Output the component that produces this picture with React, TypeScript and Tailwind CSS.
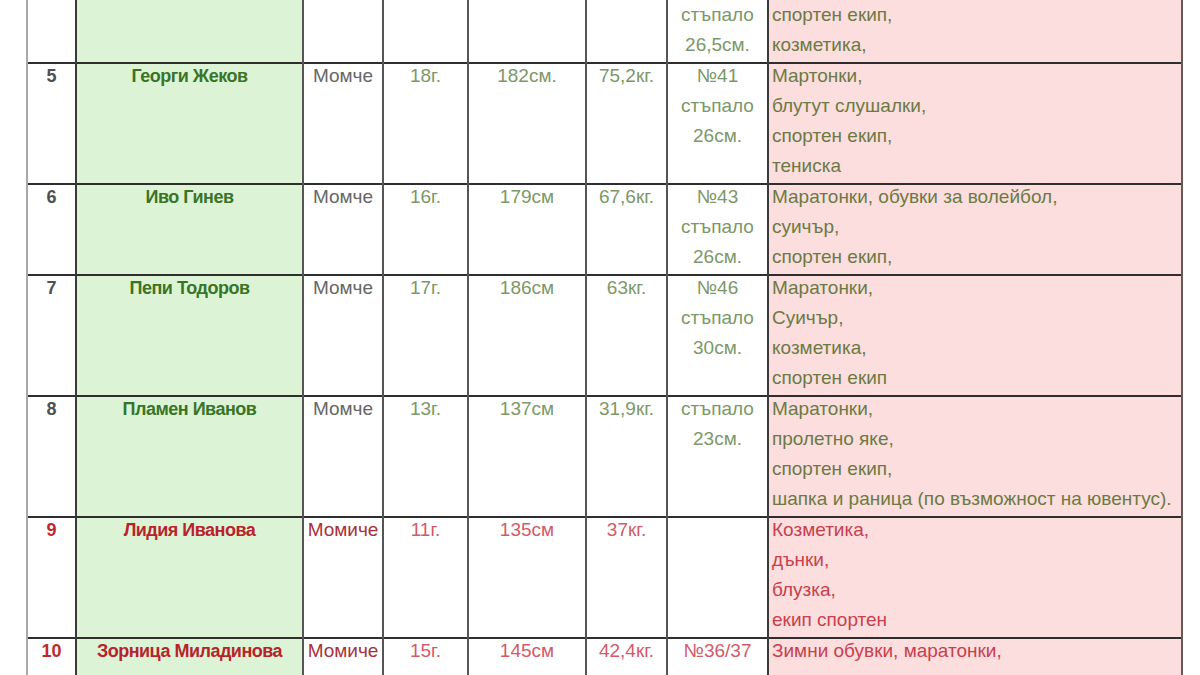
import React from "react";

type Row = {
  n: string;
  name: string;
  g: string;
  age: string;
  h: string;
  w: string;
  shoe: string[];
  items: string[];
  red?: boolean;
};

const rows: Row[] = [
  {
    n: "4",
    name: "Мартин Петров",
    g: "Момче",
    age: "14г.",
    h: "165см",
    w: "52кг.",
    shoe: ["№40/41", "\u00a0", "стъпало", "26,5см."],
    items: ["Маратонки,", "дънки,", "спортен екип,", "козметика,"],
  },
  {
    n: "5",
    name: "Георги Жеков",
    g: "Момче",
    age: "18г.",
    h: "182см.",
    w: "75,2кг.",
    shoe: ["№41", "стъпало", "26см."],
    items: ["Мартонки,", "блутут слушалки,", "спортен екип,", "тениска"],
  },
  {
    n: "6",
    name: "Иво Гинев",
    g: "Момче",
    age: "16г.",
    h: "179см",
    w: "67,6кг.",
    shoe: ["№43", "стъпало", "26см."],
    items: ["Маратонки, обувки за волейбол,", "суичър,", "спортен екип,"],
  },
  {
    n: "7",
    name: "Пепи Тодоров",
    g: "Момче",
    age: "17г.",
    h: "186см",
    w: "63кг.",
    shoe: ["№46", "стъпало", "30см."],
    items: ["Маратонки,", "Суичър,", "козметика,", "спортен екип"],
  },
  {
    n: "8",
    name: "Пламен Иванов",
    g: "Момче",
    age: "13г.",
    h: "137см",
    w: "31,9кг.",
    shoe: ["стъпало", "23см."],
    items: [
      "Маратонки,",
      "пролетно яке,",
      "спортен екип,",
      "шапка и раница (по възможност на ювентус).",
    ],
  },
  {
    n: "9",
    name: "Лидия Иванова",
    g: "Момиче",
    age: "11г.",
    h: "135см",
    w: "37кг.",
    shoe: [],
    items: ["Козметика,", "дънки,", "блузка,", "екип спортен"],
    red: true,
  },
  {
    n: "10",
    name: "Зорница Миладинова",
    g: "Момиче",
    age: "15г.",
    h: "145см",
    w: "42,4кг.",
    shoe: ["№36/37", "стъпало", "23см."],
    items: ["Зимни обувки, маратонки,", "клин, спортен екип,", "козметика"],
    red: true,
  },
];

function Lines({ lines }: { lines: string[] }) {
  return (
    <div className="-mt-[3px]">
      {lines.map((l, i) => (
        <div key={i} className="whitespace-nowrap">
          {l}
        </div>
      ))}
    </div>
  );
}

export default function App() {
  return (
    <div className="w-[1200px] h-[675px] overflow-hidden bg-white font-['Liberation_Sans',Arial,sans-serif] text-[19px] leading-[30px]">
      <table className="-mt-[59px] ml-[26px] w-[1155px] table-fixed border-collapse">
        <colgroup>
          <col className="w-[49px]" />
          <col className="w-[227px]" />
          <col className="w-[80px]" />
          <col className="w-[85px]" />
          <col className="w-[118px]" />
          <col className="w-[81px]" />
          <col className="w-[101px]" />
          <col className="w-[414px]" />
        </colgroup>
        <tbody>
          {rows.map((r) => {
            const num = r.red ? "text-[#c0282f]" : "text-[#505050]";
            const name = r.red ? "text-[#b8232b]" : "text-[#3a7428]";
            const g = r.red ? "text-[#a8303a]" : "text-[#666666]";
            const val = r.red ? "text-[#d35a68]" : "text-[#7c9868]";
            const items = r.red ? "text-[#c8404c]" : "text-[#6b7a44]";
            return (
              <tr key={r.n} className="align-top border-y-2 border-[#2e2e2e]">
                <td className={`border-l-2 border-l-[#a9a9a9] border-r-2 border-r-[#3a3a3a] pb-[2px] text-center font-bold text-[18px] ${num}`}>
                  <Lines lines={[r.n]} />
                </td>
                <td className={`border-r-2 border-r-[#555555] bg-[#dcf4d5] pb-[2px] text-center font-bold text-[18px] tracking-[-0.5px] ${name}`}>
                  <Lines lines={[r.name]} />
                </td>
                <td className={`border-r-2 border-r-[#555555] pb-[2px] text-center ${g}`}>
                  <Lines lines={[r.g]} />
                </td>
                <td className={`border-r-2 border-r-[#555555] pb-[2px] text-center ${val}`}>
                  <Lines lines={[r.age]} />
                </td>
                <td className={`border-r-2 border-r-[#555555] pb-[2px] text-center ${val}`}>
                  <Lines lines={[r.h]} />
                </td>
                <td className={`border-r-2 border-r-[#555555] pb-[2px] text-center ${val}`}>
                  <Lines lines={[r.w]} />
                </td>
                <td className={`border-r-2 border-r-[#3a3a3a] pb-[2px] text-center ${val}`}>
                  <Lines lines={r.shoe} />
                </td>
                <td className={`border-r-2 border-r-[#6a5858] bg-[#fcdede] pb-[2px] pl-[3px] ${items}`}>
                  <Lines lines={r.items} />
                </td>
              </tr>
            );
          })}
        </tbody>
      </table>
    </div>
  );
}
